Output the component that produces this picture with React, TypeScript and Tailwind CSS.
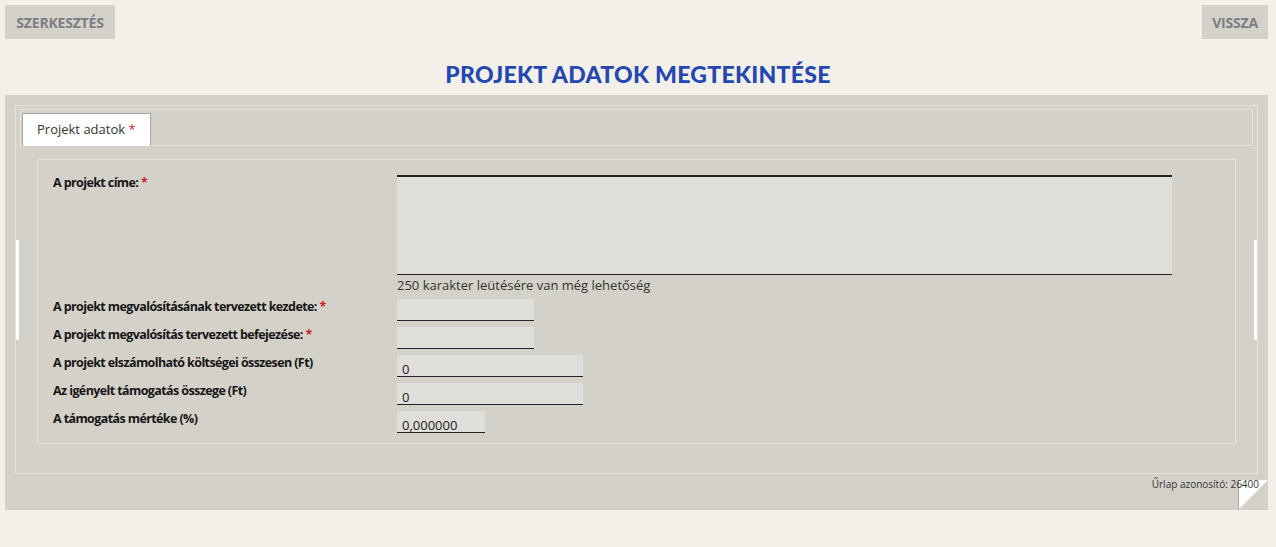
import React from 'react';

const Req = () => <span className="text-[#cc1f1f]">*</span>;

const Row = ({ label, req, width, value }: { label: string; req?: boolean; width: string; value?: string }) => (
  <div className="flex items-start">
    <div className="w-[344px] -mt-[1px] text-[12.5px] font-bold tracking-[-0.6px] text-[#161616]">
      {label} {req && <Req />}
    </div>
    <div className={`${width} h-[22px] bg-[#dfdeda] border-b border-[#222] text-[13px] leading-[14px] pt-[7px] pl-[5px] text-[#222]`}>
      {value}
    </div>
  </div>
);

export default function App() {
  return (
    <div className="min-h-[547px] bg-[#f3f0e9] px-[5px] pt-[5px]" style={{ fontFamily: '"Open Sans", "Noto Sans", sans-serif' }}>
      {/* felső gombok */}
      <div className="flex justify-between">
        <button className="h-[34px] w-[110px] bg-[#d4d1c9] text-[14px] font-bold tracking-[-0.2px] text-[#7b7f85]">SZERKESZTÉS</button>
        <button className="h-[34px] w-[66px] mr-[3px] bg-[#d4d1c9] text-[14px] font-bold tracking-[-0.2px] text-[#7b7f85]">VISSZA</button>
      </div>

      <h1
        className="text-center text-[23px] leading-[30px] mt-[20px] mb-[6px] font-black tracking-[0.3px] text-[#2447b0]"
        style={{ fontFamily: 'Lato, sans-serif' }}
      >
        PROJEKT ADATOK MEGTEKINTÉSE
      </h1>

      {/* fő panel */}
      <div className="relative w-[1263px] bg-[#d4d1c9] pt-[10px] px-[10px] pb-[36px]">
        <div className="relative border border-[#e4e2db] px-[4px] pt-[3px] pb-[29px]">
          <div className="absolute left-[0px] top-[134px] w-[3px] h-[100px] bg-white" />
          <div className="absolute right-[0px] top-[134px] w-[3px] h-[100px] bg-white" />

          {/* fül sáv */}
          <div className="border border-[#e4e2db] h-[37px] flex items-end pl-[1px]">
            <div className="h-[33px] px-[14px] bg-white border border-b-0 border-[#a9a7a1] text-[13px] text-[#333] flex items-center -mb-[1px]">
              Projekt adatok&nbsp;<Req />
            </div>
          </div>

          {/* tartalom */}
          <div className="mx-[17px] mt-[13px] border border-[#e4e2db] pl-[15px] pt-[15px] pb-[10px]">
            <div className="flex items-start">
              <div className="w-[344px] -mt-[1px] text-[12.5px] font-bold tracking-[-0.6px] text-[#161616]">
                A projekt címe: <Req />
              </div>
              <div>
                <div className="w-[775px] h-[100px] bg-[#dfdeda] border-t-2 border-b border-[#222]" />
                <div className="text-[13px] leading-[20px] text-[#333]">250 karakter leütésére van még lehetőség</div>
              </div>
            </div>
            <div className="flex flex-col gap-[6px] mt-[4px]">
              <Row label="A projekt megvalósításának tervezett kezdete:" req width="w-[137px]" />
              <Row label="A projekt megvalósítás tervezett befejezése:" req width="w-[137px]" />
              <Row label="A projekt elszámolható költségei összesen (Ft)" width="w-[186px]" value="0" />
              <Row label="Az igényelt támogatás összege (Ft)" width="w-[186px]" value="0" />
              <Row label="A támogatás mértéke (%)" width="w-[88px]" value="0,000000" />
            </div>
          </div>
        </div>

        <svg className="absolute right-0 bottom-0" width="30" height="30" viewBox="0 0 30 30">
          <polygon points="0,0 30,0 0,30" fill="#ffffff" />
          <line x1="0.5" y1="0" x2="0.5" y2="30" stroke="#a9a7a1" />
        </svg>
        <div className="absolute right-[9px] bottom-[18px] text-[10px] text-[#333]">Űrlap azonosító: 26400</div>
      </div>
    </div>
  );
}
